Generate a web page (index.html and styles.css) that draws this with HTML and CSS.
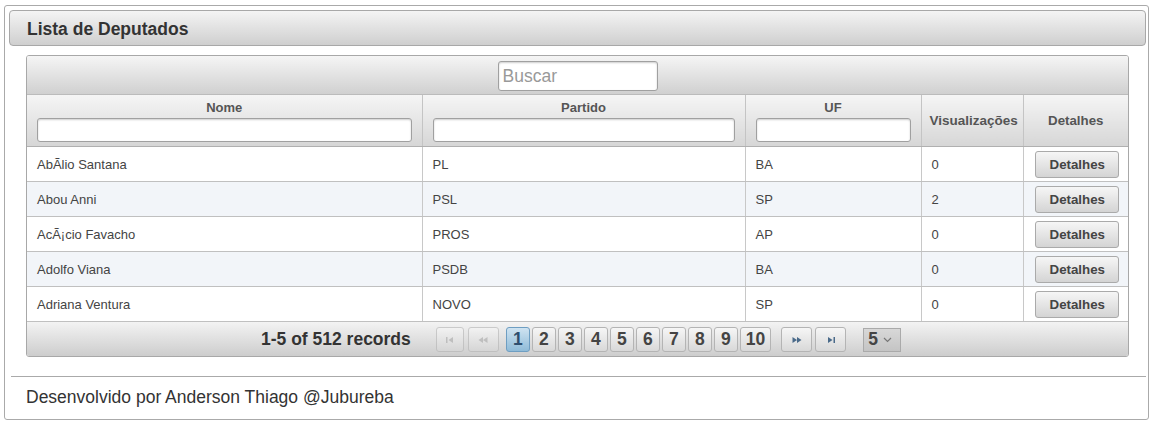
FILE: index.html
```html
<!DOCTYPE html>
<html>
<head>
<meta charset="utf-8">
<link rel="stylesheet" href="styles.css">
</head>
<body>
<div class="panel">
  <div class="panel-header">Lista de Deputados</div>
  <div class="panel-body">
    <div class="datatable">
      <div class="toolbar"><input class="search" placeholder="Buscar"></div>
      <table>
        <colgroup>
          <col class="c-nome"><col class="c-partido"><col class="c-uf"><col class="c-vis"><col class="c-det">
        </colgroup>
        <thead>
          <tr>
            <th><div class="th-label">Nome</div><input class="filter"></th>
            <th><div class="th-label">Partido</div><input class="filter"></th>
            <th><div class="th-label">UF</div><input class="filter"></th>
            <th class="plain vis">Visualizações</th>
            <th class="plain">Detalhes</th>
          </tr>
        </thead>
        <tbody>
          <tr><td>AbÃlio Santana</td><td>PL</td><td>BA</td><td>0</td><td class="act"><button class="btn">Detalhes</button></td></tr>
          <tr class="odd"><td>Abou Anni</td><td>PSL</td><td>SP</td><td>2</td><td class="act"><button class="btn">Detalhes</button></td></tr>
          <tr><td>AcÃ¡cio Favacho</td><td>PROS</td><td>AP</td><td>0</td><td class="act"><button class="btn">Detalhes</button></td></tr>
          <tr class="odd"><td>Adolfo Viana</td><td>PSDB</td><td>BA</td><td>0</td><td class="act"><button class="btn">Detalhes</button></td></tr>
          <tr><td>Adriana Ventura</td><td>NOVO</td><td>SP</td><td>0</td><td class="act"><button class="btn">Detalhes</button></td></tr>
        </tbody>
      </table>
      <div class="paginator">
        <span class="records">1-5 of 512 records</span>
        <span class="pbtn nav disabled wide1"><svg width="10" height="8" viewBox="0 0 10 8"><rect x="1" y="1" width="1.5" height="6" fill="currentColor"/><path d="M8 1 L3.5 4 L8 7 Z" fill="currentColor"/></svg></span>
        <span class="pbtn nav disabled wide2"><svg width="12" height="8" viewBox="0 0 12 8"><path d="M6 1 L1.5 4 L6 7 Z M10.5 1 L6 4 L10.5 7 Z" fill="currentColor"/></svg></span>
        <span class="pages">
          <span class="pbtn num active">1</span>
          <span class="pbtn num">2</span>
          <span class="pbtn num">3</span>
          <span class="pbtn num">4</span>
          <span class="pbtn num">5</span>
          <span class="pbtn num">6</span>
          <span class="pbtn num">7</span>
          <span class="pbtn num">8</span>
          <span class="pbtn num">9</span>
          <span class="pbtn num">10</span>
        </span>
        <span class="pbtn nav wide2 next"><svg width="12" height="8" viewBox="0 0 12 8"><path d="M1.5 1 L6 4 L1.5 7 Z M6 1 L10.5 4 L6 7 Z" fill="currentColor"/></svg></span>
        <span class="pbtn nav wide2"><svg width="10" height="8" viewBox="0 0 10 8"><path d="M2 1 L6.5 4 L2 7 Z" fill="currentColor"/><rect x="7.5" y="1" width="1.5" height="6" fill="currentColor"/></svg></span>
        <span class="rpp">5 <svg width="9" height="6" viewBox="0 0 9 6"><path d="M1 1 L4.5 4.5 L8 1" fill="none" stroke="#777" stroke-width="1.2"/></svg></span>
      </div>
    </div>
  </div>
  <div class="footer">Desenvolvido por Anderson Thiago @Jubureba</div>
</div>
</body>
</html>
```

FILE: styles.css
```css
html, body {
  margin: 0;
  padding: 0;
  background: #fff;
}
body {
  padding: 5px 1px 0 4px;
  font-family: "Liberation Sans", Arial, sans-serif;
  color: #333;
}
.panel {
  border: 1px solid #aaa;
  border-radius: 3px;
  height: 415px;
  box-sizing: border-box;
  padding: 4px 2px 0 4px;
}
.panel-header {
  height: 36px;
  box-sizing: border-box;
  border: 1px solid #a8a8a8;
  border-radius: 4px;
  background: linear-gradient(#f4f4f4, #cfcfcf);
  font-size: 17.5px;
  font-weight: bold;
  color: #333;
  padding: 0 0 0 17px;
  line-height: 37px;
}
.panel-body {
  padding: 9px 17px 0 17px;
}
.datatable {
  border: 1px solid #a8a8a8;
  border-radius: 3px;
  overflow: hidden;
  width: 1103px;
  box-sizing: border-box;
}
.toolbar {
  height: 39px;
  box-sizing: border-box;
  background: linear-gradient(#f5f5f5, #d0d0d0);
  border-bottom: 1px solid #bbb;
  display: flex;
  justify-content: center;
  padding-top: 5px;
}
.search {
  width: 160px;
  height: 30px;
  box-sizing: border-box;
  border: 1px solid #a0a0a0;
  border-radius: 3px;
  box-shadow: inset 0 1px 2px rgba(0,0,0,0.2);
  font-family: "Liberation Sans", Arial, sans-serif;
  font-size: 17.5px;
  padding: 0 4px;
}
.search::placeholder { color: #999; }
table {
  width: 100%;
  border-collapse: collapse;
  table-layout: fixed;
}
.c-nome { width: 395px; }
.c-partido { width: 323px; }
.c-uf { width: 176px; }
.c-vis { width: 102px; }
.c-det { width: auto; }
th {
  background: linear-gradient(#f5f5f5, #d6d6d6);
  border-right: 1px solid #c4c4c4;
  border-bottom: 1px solid #b0b0b0;
  height: 51px;
  padding: 5px 10px 4px 10px;
  box-sizing: border-box;
  font-size: 13px;
  font-weight: bold;
  color: #555;
  vertical-align: top;
}
th:last-child { border-right: none; }
th.plain { vertical-align: middle; padding: 0 2px; font-size: 13.3px; }
th.vis { padding: 0 0 0 8px; font-size: 13.5px; text-align: left; }
.th-label { text-align: center; line-height: 15px; height: 18px; }
.filter {
  display: block;
  width: 100%;
  height: 24px;
  box-sizing: border-box;
  border: 1px solid #a0a0a0;
  border-radius: 3px;
  box-shadow: inset 0 1px 2px rgba(0,0,0,0.2);
  background: #fff;
  margin-top: 0;
}
td {
  height: 35px;
  box-sizing: border-box;
  border-right: 1px solid #c8c8c8;
  border-bottom: 1px solid #c0c0c0;
  padding: 0 10px;
  font-size: 13px;
  color: #444;
  background: #fff;
}
td:last-child { border-right: none; }
tr.odd td { background: #f2f5f9; }
td.act { text-align: center; padding: 0; }
.btn {
  width: 84px;
  height: 27px;
  border: 1px solid #aaa;
  border-radius: 3px;
  background: linear-gradient(#f6f6f6, #d4d4d4);
  font-family: "Liberation Sans", Arial, sans-serif;
  font-size: 13.3px;
  font-weight: bold;
  color: #444;
  padding: 0;
  margin-left: 3px;
}
.paginator {
  height: 34px;
  background: linear-gradient(#f3f3f3, #cdcdcd);
  display: flex;
  align-items: center;
  padding-left: 234px;
  padding-top: 1px;
  box-sizing: border-box;
}
.records {
  font-size: 17.5px;
  font-weight: bold;
  color: #333;
  margin-right: 25px;
}
.pbtn {
  display: inline-flex;
  align-items: center;
  justify-content: center;
  height: 25px;
  box-sizing: border-box;
  border: 1px solid #b4b4b4;
  border-radius: 3px;
  background: linear-gradient(#f6f6f6, #d8d8d8);
  color: #3a5a7a;
}
.nav { width: 28px; color: #4a6a8a; margin-right: 4px; }
.nav.wide2 { width: 31px; }
.nav.wide1 { width: 28px; }
.nav.disabled { color: #aaa; opacity: 0.6; }
.pages { display: inline-flex; gap: 2px; margin: 0 10px 0 3px; }
.num {
  min-width: 24px;
  padding: 0 5px;
  font-size: 17.5px;
  font-weight: bold;
  color: #444;
}
.num.active {
  background: linear-gradient(#cfe3f1, #8fbbd8);
  border-color: #6e9ec2;
  color: #2e4e6e;
}
.next { margin-right: 3px; }
.rpp {
  margin-left: 13px;
  width: 38px;
  height: 24px;
  box-sizing: border-box;
  border: 1px solid #aaa;
  background: linear-gradient(#d8d8d8, #c4c4c4);
  font-size: 17.5px;
  font-weight: bold;
  color: #444;
  display: inline-flex;
  align-items: center;
  padding-left: 4px;
  gap: 5px;
}
.footer {
  margin: 19px 0 0 2px;
  border-top: 1px solid #aaa;
  padding: 10px 0 0 15px;
  font-size: 17.5px;
  color: #333;
}
```
